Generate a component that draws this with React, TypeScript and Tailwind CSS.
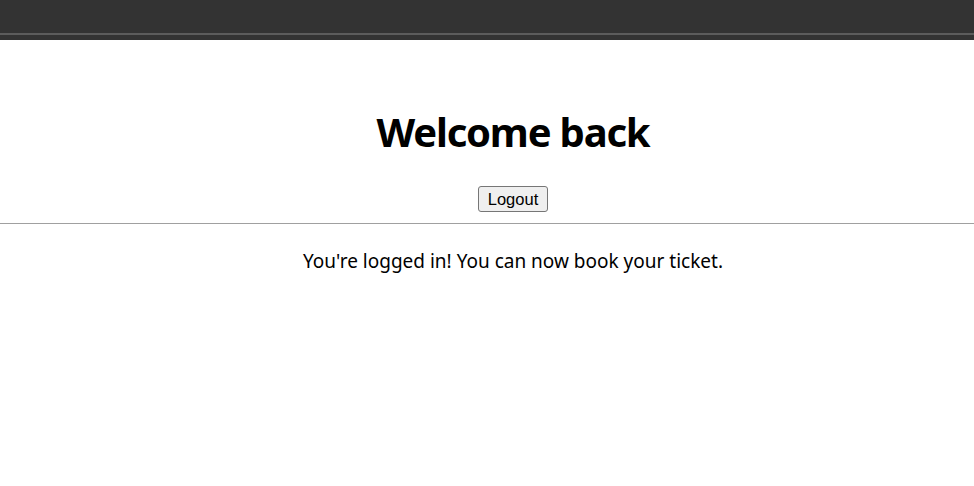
export default function App() {
  return (
    <div className="min-h-screen overflow-hidden bg-white font-['Noto_Sans',sans-serif] text-black">
      <div className="h-[40px] bg-[#333333] flex flex-col">
        <div className="h-[33px]" />
        <div className="h-[2px] bg-[#5c5c5c]" />
      </div>
      <div className="w-[1026px]">
        <div className="flex flex-col items-center">
          <h1 className="mt-[64px] text-[40px] leading-[56px] font-bold tracking-[-1.2px]">Welcome back</h1>
          <button className="mt-[26px] h-[26px] px-[9px] text-[16.5px] leading-none font-['Liberation_Sans',sans-serif] bg-[#efefef] border border-[#767676] rounded-[3px]">
            Logout
          </button>
        </div>
        <div className="mt-[11px] h-px bg-[#a0a0a0]" />
        <p className="mt-[24px] text-center text-[19px] leading-[26px]">You're logged in! You can now book your ticket.</p>
      </div>
    </div>
  );
}
